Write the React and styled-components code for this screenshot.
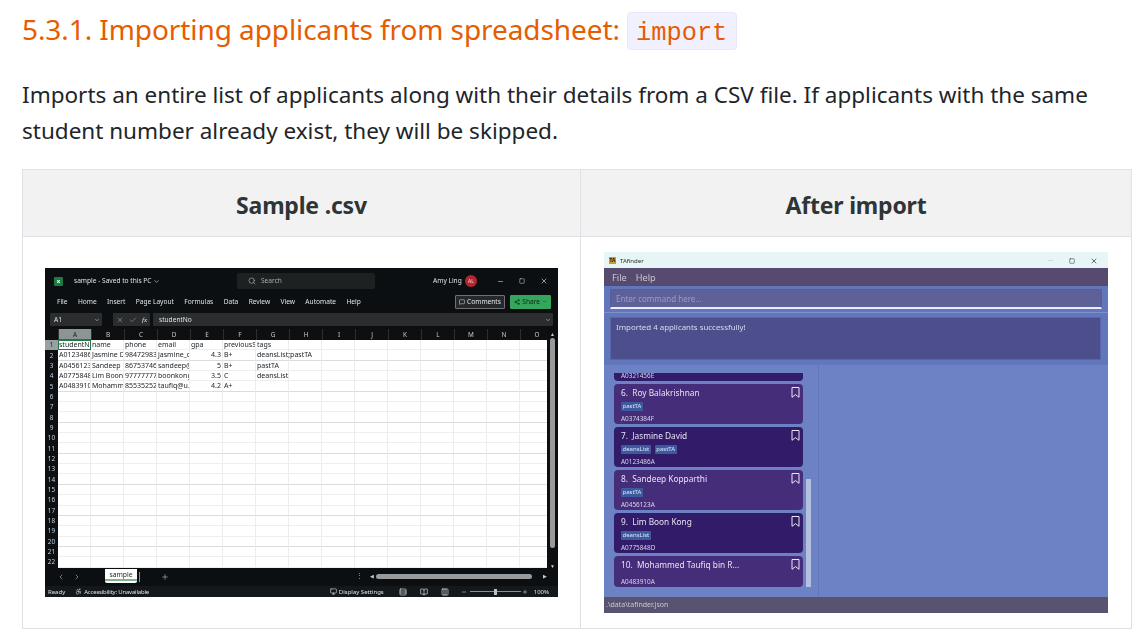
import styled, { createGlobalStyle } from "styled-components";
import {
  Search, ChevronDown, X, Check, Minus, Square, MessageSquare, Share2,
  ChevronLeft, ChevronRight, Plus, Monitor, Accessibility, Rows3, BookOpen, Columns3,
} from "lucide-react";

const GlobalStyle = createGlobalStyle`
  html, body { margin: 0; padding: 0; background: #fff; }
  body {
    font-family: "Noto Sans", "Open Sans", sans-serif;
    color: #212529;
    overflow: hidden;
  }
`;

const Page = styled.div`
  width: 1146px;
  height: 638px;
  padding: 0 14px 0 22px;
  box-sizing: border-box;
  overflow: hidden;
`;

const Heading = styled.h3`
  margin: 0;
  padding-top: 12px;
  height: 65px;
  display: flex;
  align-items: flex-start;
  gap: 7px;
  font-size: 28px;
  font-weight: 400;
  line-height: 34px;
  color: #e65c00;
  letter-spacing: -0.08px;
`;

const Code = styled.code`
  font-family: "Liberation Mono", monospace;
  font-size: 25.4px;
  letter-spacing: 0;
  line-height: 34px;
  padding: 4px 9px 0 8px;
  height: 38px;
  box-sizing: border-box;
  background: #f0f0ff;
  border: 1px solid #e8e8f6;
  border-radius: 4px;
`;

const Lead = styled.p`
  margin: 0 0 20px;
  font-size: 22.5px;
  line-height: 36px;
  width: 1100px;
  color: #212529;
`;

const Table = styled.div`
  width: 1110px;
  height: 460px;
  box-sizing: border-box;
  border: 1px solid #dee2e6;
  display: grid;
  grid-template-columns: 557px 1fr;
  grid-template-rows: 67px 1fr;
`;

const HeadCell = styled.div`
  background: #f2f2f2;
  border-bottom: 1px solid #dee2e6;
  border-left: ${(p) => (p.$second ? "1px solid #dee2e6" : "none")};
  display: flex;
  align-items: center;
  justify-content: center;
  padding-top: 3px;
  box-sizing: border-box;
  font-size: 23px;
  font-weight: 700;
  color: #2f3437;
  letter-spacing: -0.2px;
`;

const BodyCell = styled.div`
  border-left: ${(p) => (p.$second ? "1px solid #dee2e6" : "none")};
  display: flex;
  align-items: center;
  justify-content: center;
`;

/* ---- excel screenshot ---- */

const Excel = styled.div`
  width: 513px;
  height: 329px;
  background: #0b0f12;
  color: #dfe3e4;
  font-size: 6.6px;
  line-height: 10px;
  display: flex;
  flex-direction: column;
  overflow: hidden;
  filter: blur(0.25px);
`;

const XlTitle = styled.div`
  height: 23px;
  flex: none;
  display: flex;
  align-items: center;
  padding: 3px 0 0 9px;
  box-sizing: border-box;
`;

const XlLogo = styled.span`
  width: 9px;
  height: 9px;
  border-radius: 1px;
  background: #1d7a45;
  color: #fff;
  font-size: 6px;
  font-weight: 700;
  line-height: 9px;
  text-align: center;
  margin-right: 11px;
`;

const XlDocName = styled.span`
  display: flex;
  align-items: center;
  gap: 2px;
  width: 163px;
`;

const XlSearch = styled.div`
  width: 138px;
  height: 16px;
  background: #1e2122;
  border-radius: 2px;
  display: flex;
  align-items: center;
  gap: 5px;
  padding-left: 11px;
  box-sizing: border-box;
  color: #a9adaf;
`;

const XlUser = styled.span`
  margin-left: 58px;
  width: 27px;
  white-space: nowrap;
`;

const XlAvatar = styled.span`
  width: 12px;
  height: 12px;
  border-radius: 50%;
  background: #b3262f;
  color: #f3d5d5;
  font-size: 5px;
  text-align: center;
  line-height: 12px;
  margin: 0 20px 0 5px;
`;

const WinIcons = styled.div`
  display: flex;
  align-items: center;
  gap: ${(p) => p.$gap}px;
  color: ${(p) => p.$color};
`;

const XlMenu = styled.div`
  height: 21px;
  flex: none;
  display: flex;
  align-items: center;
  padding: 0 7px 0 12px;
  gap: 10.4px;
`;

const Pill = styled.span`
  display: flex;
  align-items: center;
  gap: 2px;
  height: 12px;
  padding: 0 3px;
  margin-left: ${(p) => (p.$green ? "-5px" : "0")};
  border-radius: 1px;
  border: 1px solid ${(p) => (p.$green ? "#35a75c" : "#6e7275")};
  background: ${(p) => (p.$green ? "#35a75c" : "#26292b")};
  color: ${(p) => (p.$green ? "#0d2315" : "#e5e7e8")};
`;

const Spacer = styled.span`
  flex: 1;
`;

const XlFormula = styled.div`
  height: 17px;
  flex: none;
  display: flex;
  align-items: center;
  padding: 0 5px 2px 5px;
  box-sizing: border-box;
  gap: 3px;
`;

const NameBox = styled.div`
  height: 13px;
  width: 52px;
  background: #2b2d2e;
  border-radius: 1px;
  display: flex;
  align-items: center;
  justify-content: space-between;
  padding: 0 2px 0 4px;
  box-sizing: border-box;
`;

const FxBox = styled(NameBox)`
  width: 37px;
  margin-left: 8px;
  padding: 0 3px;
  color: #8b8f91;
`;

const FormulaInput = styled(NameBox)`
  flex: 1;
  padding-left: 6px;
`;

const Fx = styled.i`
  font-family: "Liberation Serif", serif;
  color: #e5e7e8;
  font-size: 7px;
`;

const XlSheet = styled.div`
  height: 240px;
  flex: none;
  display: flex;
`;

const XlGrid = styled.div`
  width: 502px;
  overflow: hidden;
  display: flex;
  flex-direction: column;
`;

const XlRow = styled.div`
  display: flex;
  flex: none;
  height: ${(p) => (p.$head ? "11px" : "10.35px")};
  box-sizing: border-box;
  color: #22262a;
`;

const Corner = styled.span`
  flex: none;
  width: 13px;
  display: flex;
  align-items: center;
  justify-content: center;
  color: ${(p) => (p.$active ? "#1c1c1c" : "#b9d3ea")};
  background: ${(p) => (p.$active ? "#9aa0a2" : "#0d0f10")};
  font-size: 6.4px;
`;

const ColHead = styled.span`
  flex: none;
  width: 33px;
  text-align: center;
  font-size: 6.4px;
  line-height: 11px;
  color: ${(p) => (p.$active ? "#1c1c1c" : "#c8ccce")};
  background: ${(p) => (p.$active ? "#8e9496" : "#0d0f10")};
  border-left: 1px solid #2c3033;
  border-bottom: ${(p) => (p.$active ? "1px solid #1d7a45" : "none")};
  box-sizing: border-box;
`;

const Cell = styled.span`
  flex: none;
  width: 33px;
  box-sizing: border-box;
  background: #fff;
  font-size: 7px;
  border-right: 1px solid #ededed;
  border-bottom: 1px solid ${(p) => (p.$strong ? "#dcdcdc" : "#eeeeee")};
  padding: 0 1px;
  line-height: 10px;
  white-space: nowrap;
  overflow: ${(p) => (p.$spill ? "visible" : "hidden")};
  position: relative;
  text-align: ${(p) => (p.$right ? "right" : "left")};
  outline: ${(p) => (p.$selected ? "1px solid #1d7a45" : "none")};
  outline-offset: -1px;
  z-index: ${(p) => (p.$spill ? 1 : 0)};
`;

const XlScroll = styled.div`
  flex: 1;
  display: flex;
  flex-direction: column;
  align-items: center;
  padding-top: 2px;
  color: #c9c9c9;
  font-size: 5px;
  line-height: 6px;
`;

const XlThumb = styled.div`
  width: 5px;
  height: 210px;
  background: #9a9a9a;
  border-radius: 3px;
  margin-top: 1px;
`;

const XlTabs = styled.div`
  height: 17px;
  flex: none;
  display: flex;
  align-items: flex-start;
  color: #a8acae;
  padding: 0 11px 0 12px;
`;

const TabIcon = styled.span`
  display: flex;
  margin: 4px 0 0 ${(p) => p.$left || 0}px;
`;

const SheetTab = styled.span`
  width: 32px;
  height: 14px;
  margin-left: 24px;
  background: #fff;
  color: #1d1f20;
  border-radius: 0 0 2px 2px;
  text-align: center;
  font-size: 6.8px;
  line-height: 11px;
  border-bottom: 2px solid #ffffff;
  box-shadow: inset 0 -2px 0 #7fb48f;
  box-sizing: border-box;
`;

const TabBar = styled.span`
  width: 1px;
  height: 10px;
  margin: 3px 0 0 2px;
  background: #8b8f91;
`;

const MoreDots = styled.span`
  line-height: 14px;
  margin-right: 7px;
`;

const ScrollArrow = styled.span`
  font-size: 5px;
  line-height: 15px;
  color: #c9c9c9;
`;

const HScroll = styled.div`
  width: 156px;
  height: 5px;
  margin: 5px 11px 0 2px;
  background: #9a9a9a;
  border-radius: 3px;
`;

const XlStatus = styled.div`
  flex: 1;
  display: flex;
  align-items: center;
  padding: 0 9px 0 3px;
  background: #15181a;
  font-size: 6px;
`;

const StatusItem = styled.span`
  display: flex;
  align-items: center;
  gap: 2px;
  margin-left: ${(p) => p.$left || 0}px;
  letter-spacing: ${(p) => (p.$tight ? "-0.2px" : "0")};
`;

const ViewIcons = styled.span`
  display: flex;
  align-items: center;
  gap: 13px;
  margin: 0 12px 0 15px;
`;

const ZoomTrack = styled.span`
  width: 51px;
  height: 1px;
  margin: 0 1px 0 3px;
  background: #8d9092;
  display: flex;
  justify-content: center;
  align-items: center;
`;

const ZoomKnob = styled.span`
  width: 3px;
  height: 6px;
  background: #bfc2c3;
`;

/* ---- tafinder app screenshot ---- */

const Finder = styled.div`
  width: 504px;
  height: 361px;
  display: flex;
  flex-direction: column;
  background: #6c82c4;
  color: #e4e5f2;
  overflow: hidden;
  box-shadow: inset 0 1px 0 #8a9190;
  filter: blur(0.25px);
`;

const FinderTitle = styled.div`
  height: 16px;
  flex: none;
  background: #e7f5f7;
  color: #2a2a2a;
  font-size: 6px;
  display: flex;
  align-items: center;
  padding: 1px 10px 0 5px;
  box-sizing: border-box;
  gap: 4px;
`;

const AppLogo = styled.span`
  width: 7px;
  height: 7px;
  background: #d29a2c;
  color: #2a1a08;
  font-size: 5px;
  line-height: 7px;
  text-align: center;
  font-weight: 700;
`;

const FinderMenu = styled.div`
  height: 18px;
  flex: none;
  background: #564a6e;
  color: #c8c8d4;
  font-size: 9.2px;
  display: flex;
  align-items: center;
  gap: 9px;
  padding-left: 8px;
`;

const CommandWrap = styled.div`
  flex: none;
  padding: 3px 6px 3px 6px;
  border-bottom: 1px solid #7f90cc;
  background: #6277bb;
`;

const CommandBox = styled.div`
  height: 20px;
  background: #5e6098;
  border: 1px solid #4f5f9f;
  border-bottom: 2px solid #e8ecff;
  box-sizing: border-box;
  color: #9a9cc4;
  font-size: 8px;
  line-height: 17px;
  padding-left: 5px;
`;

const ResultWrap = styled(CommandWrap)`
  padding: 4px 7px 4px 6px;
  border-bottom: none;
`;

const ResultBox = styled.div`
  height: 43px;
  background: #4c4f8c;
  border: 1px solid #5866a8;
  box-sizing: border-box;
  color: #d8dbee;
  font-size: 7.9px;
  line-height: 12px;
  padding: 3px 5px;
`;

const FinderBody = styled.div`
  flex: 1;
  min-height: 0;
  display: flex;
  border-top: 1px solid #6279c0;
`;

const ListPane = styled.div`
  width: 215px;
  flex: none;
  border-right: 1px solid #6277bb;
  box-sizing: border-box;
  display: flex;
  padding: 8px 6px 10px 10px;
  gap: 3px;
`;

const CardList = styled.div`
  width: 189px;
  display: flex;
  flex-direction: column;
  justify-content: flex-end;
  gap: 3px;
  overflow: hidden;
`;

const Card = styled.div`
  flex: none;
  position: relative;
  height: ${(p) => p.$h}px;
  box-sizing: border-box;
  border-radius: 4px;
  background: ${(p) => (p.$dark ? "#321b69" : "#462d7a")};
  padding: 2px 7px 0;
  display: flex;
  flex-direction: column;
  color: #d9d7ea;
`;

const CardName = styled.div`
  font-size: 8.3px;
  line-height: 13px;
  color: #e6e4f2;
  white-space: pre;
`;

const TagRow = styled.div`
  display: flex;
  gap: 4px;
  margin-top: 3px;
  height: 9px;
`;

const Tag = styled.span`
  background: #3e5a9e;
  color: #dce6f8;
  font-size: 6px;
  line-height: 9px;
  padding: 0 1.5px;
  border-radius: 1px;
`;

const CardId = styled.div`
  font-size: 6.4px;
  line-height: 9px;
  margin-top: auto;
  padding-bottom: 1px;
`;

const Mark = styled.svg`
  position: absolute;
  top: 3px;
  right: 3px;
  width: 9px;
  height: 11px;
  fill: none;
  stroke: #e8e8f4;
  stroke-width: 1;
`;

const ScrollTrack = styled.div`
  flex: 1;
  display: flex;
  flex-direction: column;
  justify-content: flex-end;
`;

const ScrollThumb = styled.div`
  width: 5px;
  height: 108px;
  background: #b5bfe0;
`;

const FinderStatus = styled.div`
  height: 16px;
  flex: none;
  background: #595270;
  color: #c9c9d6;
  font-size: 7px;
  line-height: 15px;
  padding-left: 2px;
`;

const COLUMNS = "ABCDEFGHIJKLMNO".split("");

const SHEET = [
  ["studentNo", "name", "phone", "email", "gpa", "previousS", "tags"],
  ["A0123486A", "Jasmine David", "98472983", "jasmine_d", "4.3", "B+", "deansList;pastTA"],
  ["A0456123A", "Sandeep Kopparthi", "86753746", "sandeep@", "5", "B+", "pastTA"],
  ["A0775848D", "Lim Boon Kong", "97777777", "boonkong", "3.5", "C", "deansList"],
  ["A0483910A", "Mohammed", "85535252", "taufiq@u.", "4.2", "A+", ""],
];

const APPLICANTS = [
  { h: 30, dark: true, id: "A0321456E", clipped: true },
  { h: 40, name: "6.  Roy Balakrishnan", tags: ["pastTA"], id: "A0374384F" },
  { h: 40, dark: true, name: "7.  Jasmine David", tags: ["deansList", "pastTA"], id: "A0123486A" },
  { h: 40, name: "8.  Sandeep Kopparthi", tags: ["pastTA"], id: "A0456123A" },
  { h: 40, dark: true, name: "9.  Lim Boon Kong", tags: ["deansList"], id: "A0775848D" },
  { h: 31, name: "10.  Mohammed Taufiq bin R...", tags: [], id: "A0483910A" },
];

function SpreadsheetShot() {
  const rows = Array.from({ length: 22 }, (_, i) => i);
  return (
    <Excel>
      <XlTitle>
        <XlLogo>x</XlLogo>
        <XlDocName>sample - Saved to this PC <ChevronDown size={7} /></XlDocName>
        <XlSearch><Search size={8} />Search</XlSearch>
        <XlUser>Amy Ling</XlUser>
        <XlAvatar>AL</XlAvatar>
        <WinIcons $gap={15} $color="#d8dadb">
          <Minus size={7} /><Square size={6} /><X size={8} />
        </WinIcons>
        <Spacer />
      </XlTitle>
      <XlMenu>
        {["File", "Home", "Insert", "Page Layout", "Formulas", "Data", "Review", "View", "Automate", "Help"].map((m) => (
          <span key={m}>{m}</span>
        ))}
        <Spacer />
        <Pill><MessageSquare size={6} />Comments</Pill>
        <Pill $green><Share2 size={6} />Share <ChevronDown size={5} /></Pill>
      </XlMenu>
      <XlFormula>
        <NameBox>A1 <ChevronDown size={6} /></NameBox>
        <FxBox><X size={8} /><Check size={8} /><Fx>fx</Fx></FxBox>
        <FormulaInput>studentNo <ChevronDown size={6} /></FormulaInput>
      </XlFormula>
      <XlSheet>
        <XlGrid>
          <XlRow $head>
            <Corner />
            {COLUMNS.map((c, i) => <ColHead key={c} $active={i === 0}>{c}</ColHead>)}
          </XlRow>
          {rows.map((r) => (
            <XlRow key={r}>
              <Corner $active={r === 0}>{r + 1}</Corner>
              {COLUMNS.map((c, i) => {
                const value = SHEET[r]?.[i] ?? "";
                return (
                  <Cell
                    key={c}
                    $strong={r % 3 === 1}
                    $right={i === 4 && r > 0}
                    $spill={i === 6}
                    $selected={r === 0 && i === 0}
                  >
                    {value}
                  </Cell>
                );
              })}
            </XlRow>
          ))}
        </XlGrid>
        <XlScroll>
          ▲<XlThumb />
          <Spacer />▼
        </XlScroll>
      </XlSheet>
      <XlTabs>
        <TabIcon><ChevronLeft size={8} /></TabIcon>
        <TabIcon $left={8}><ChevronRight size={8} /></TabIcon>
        <SheetTab>sample</SheetTab>
        <TabBar />
        <TabIcon $left={21}><Plus size={8} /></TabIcon>
        <Spacer />
        <MoreDots>⋮</MoreDots>
        <ScrollArrow>◀</ScrollArrow>
        <HScroll />
        <ScrollArrow>▶</ScrollArrow>
      </XlTabs>
      <XlStatus>
        <StatusItem>Ready</StatusItem>
        <StatusItem $left={10} $tight><Accessibility size={7} />Accessibility: Unavailable</StatusItem>
        <Spacer />
        <StatusItem><Monitor size={7} />Display Settings</StatusItem>
        <ViewIcons><Rows3 size={8} /><BookOpen size={8} /><Columns3 size={8} /></ViewIcons>
        <Minus size={6} />
        <ZoomTrack><ZoomKnob /></ZoomTrack>
        <Plus size={6} />
        <StatusItem $left={6}>100%</StatusItem>
      </XlStatus>
    </Excel>
  );
}

function FinderShot() {
  return (
    <Finder>
      <FinderTitle>
        <AppLogo>TA</AppLogo>
        TAfinder
        <Spacer />
        <WinIcons $gap={15} $color="#2a2a2a">
          <Minus size={7} color="#c4cccc" /><Square size={6} /><X size={8} />
        </WinIcons>
      </FinderTitle>
      <FinderMenu><span>File</span><span>Help</span></FinderMenu>
      <CommandWrap><CommandBox>Enter command here...</CommandBox></CommandWrap>
      <ResultWrap><ResultBox>Imported 4 applicants successfully!</ResultBox></ResultWrap>
      <FinderBody>
        <ListPane>
          <CardList>
            {APPLICANTS.map((a) => (
              <Card key={a.id} $h={a.h} $dark={a.dark}>
                {a.name && <CardName>{a.name}</CardName>}
                {a.tags?.length > 0 && (
                  <TagRow>{a.tags.map((t) => <Tag key={t}>{t}</Tag>)}</TagRow>
                )}
                <CardId>{a.id}</CardId>
                {a.name && (
                  <Mark viewBox="0 0 9 11">
                    <path d="M1 .5h7v9.8L4.5 7.6 1 10.3z" />
                  </Mark>
                )}
              </Card>
            ))}
          </CardList>
          <ScrollTrack><ScrollThumb /></ScrollTrack>
        </ListPane>
      </FinderBody>
      <FinderStatus>.\data\tafinder.json</FinderStatus>
    </Finder>
  );
}

export default function App() {
  return (
    <Page>
      <GlobalStyle />
      <Heading>
        5.3.1. Importing applicants from spreadsheet: <Code>import</Code>
      </Heading>
      <Lead>
        Imports an entire list of applicants along with their details from a CSV file. If applicants with the same
        student number already exist, they will be skipped.
      </Lead>
      <Table>
        <HeadCell>Sample .csv</HeadCell>
        <HeadCell $second>After import</HeadCell>
        <BodyCell><SpreadsheetShot /></BodyCell>
        <BodyCell $second><FinderShot /></BodyCell>
      </Table>
    </Page>
  );
}
